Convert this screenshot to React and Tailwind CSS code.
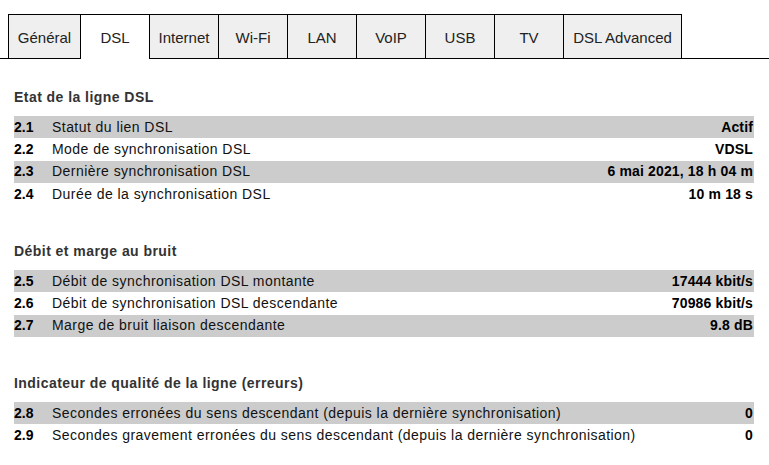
const TABS = ['Général', 'DSL', 'Internet', 'Wi-Fi', 'LAN', 'VoIP', 'USB', 'TV', 'DSL Advanced']

const SECTIONS = [
  {
    title: 'Etat de la ligne DSL',
    rows: [
      ['2.1', 'Statut du lien DSL', 'Actif'],
      ['2.2', 'Mode de synchronisation DSL', 'VDSL'],
      ['2.3', 'Dernière synchronisation DSL', '6 mai 2021, 18 h 04 m'],
      ['2.4', 'Durée de la synchronisation DSL', '10 m 18 s'],
    ],
  },
  {
    title: 'Débit et marge au bruit',
    rows: [
      ['2.5', 'Débit de synchronisation DSL montante', '17444 kbit/s'],
      ['2.6', 'Débit de synchronisation DSL descendante', '70986 kbit/s'],
      ['2.7', 'Marge de bruit liaison descendante', '9.8 dB'],
    ],
  },
  {
    title: 'Indicateur de qualité de la ligne (erreurs)',
    rows: [
      ['2.8', 'Secondes erronées du sens descendant (depuis la dernière synchronisation)', '0'],
      ['2.9', 'Secondes gravement erronées du sens descendant (depuis la dernière synchronisation)', '0'],
    ],
  },
]

function Tabs() {
  return (
    <div className="flex pt-[14px]">
      <div className="w-[8px] border-b border-black" />
      {TABS.map((t, i) => (
        <div
          key={t}
          className={`flex h-[45px] items-center justify-center border-t border-l border-black pt-[3px] text-[15px] text-[#222] ${
            i === 8 ? 'w-[119px] border-r' : 'w-[69px]'
          } ${i === 0 ? 'w-[72px]' : ''} ${t === 'DSL' ? 'bg-white' : 'border-b bg-[#efefef]'}`}
        >
          {t}
        </div>
      ))}
      <div className="flex-1 border-b border-black" />
    </div>
  )
}

function Section({ title, rows }) {
  return (
    <div>
      <h2 className="mb-[9px] h-[20px] text-[14px] leading-[20px] font-bold tracking-[0.45px] text-[#333]">{title}</h2>
      {rows.map(([num, label, value], i) => (
        <div
          key={num}
          className={`flex h-[22.3px] items-center text-[14px] text-[#111] ${i % 2 === 0 ? 'bg-[#cccccc]' : ''}`}
        >
          <span className="w-[38px] font-bold text-black">{num}</span>
          <span className="flex-1 tracking-[0.45px]">{label}</span>
          <span className="pr-[1px] font-bold tracking-[0.15px] text-black">{value}</span>
        </div>
      ))}
    </div>
  )
}

export default function App() {
  return (
    <div className="h-[465px] w-[769px] bg-white font-['Liberation_Sans',Arial,sans-serif]">
      <Tabs />
      <div className="flex w-[754px] flex-col gap-[36px] pt-[28px] pl-[14px]">
        {SECTIONS.map((s) => (
          <Section key={s.title} {...s} />
        ))}
      </div>
    </div>
  )
}
